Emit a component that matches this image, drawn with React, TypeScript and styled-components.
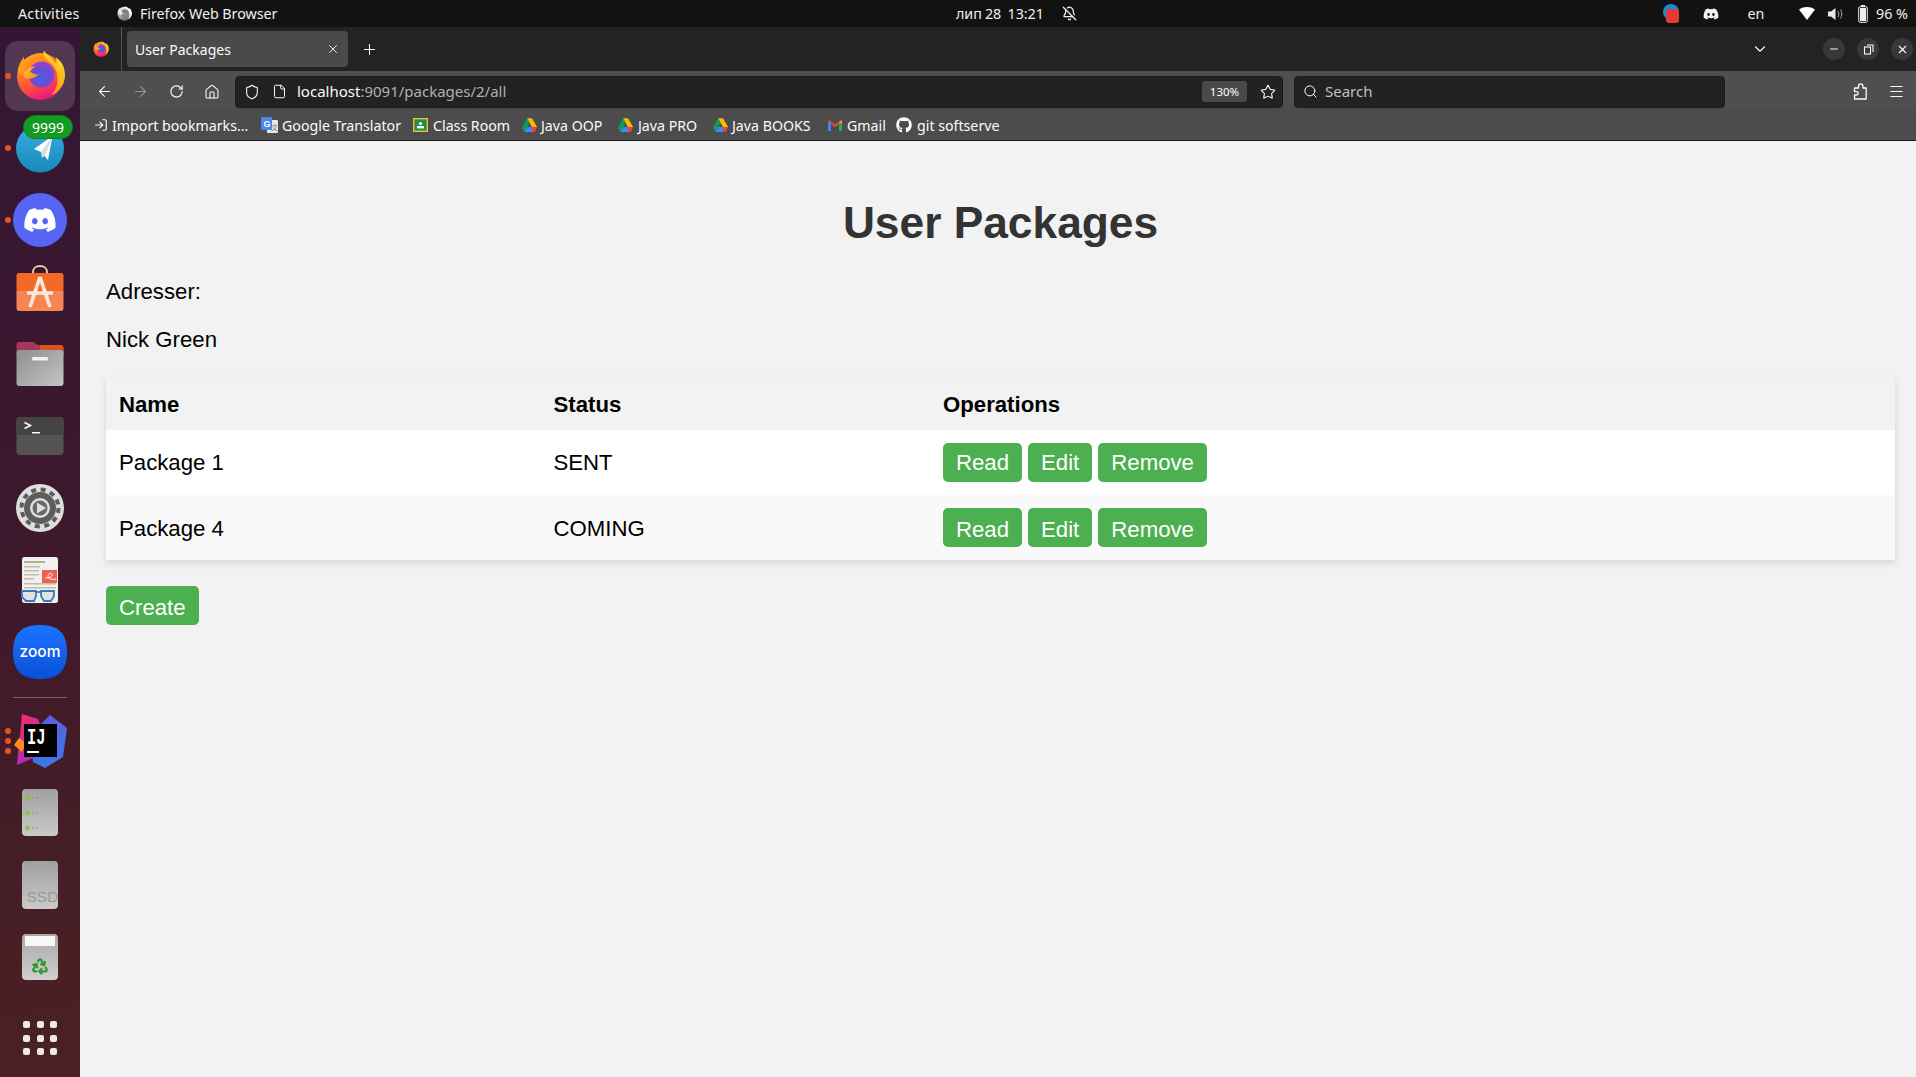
import React from 'react';
import styled, { createGlobalStyle } from 'styled-components';
import {
  ArrowLeft, ArrowRight, RotateCw, Home, Shield, File, Star, Search, Menu, X, Plus,
  ChevronDown, Minus, BellOff, Recycle, LogIn,
} from 'lucide-react';
import { FaDiscord, FaGithub } from 'react-icons/fa';

const Global = createGlobalStyle`
  html, body { margin: 0; padding: 0; height: 100%; overflow: hidden; background: #f2f2f2; }
  #root { height: 100%; }
`;

const UI = `"Noto Sans", "Open Sans", sans-serif`;
const WEB = `"Liberation Sans", Arial, sans-serif`;

const Screen = styled.div`
  width: 1916px; height: 1077px; display: flex; flex-direction: column; overflow: hidden;
  font-family: ${UI};
`;
const TopBar = styled.header`
  height: 27px; flex: none; display: flex; align-items: center; background: #121212; color: #f0f0f0;
  font-size: 14.3px; letter-spacing: -0.05px;
`;
const Activities = styled.span` margin-left: 18px; width: 62px; white-space: nowrap; letter-spacing: 0.2px; `;
const AppName = styled.span` margin-left: 37px; display: flex; align-items: center; gap: 8px; width: 160px; white-space: nowrap; `;
const GreyIcon = styled.span` display: flex; filter: grayscale(1) brightness(1.4); `;
const Clock = styled.span` margin-left: 679px; width: 88px; white-space: nowrap; word-spacing: -0.5px; `;
const Bell = styled.span` margin-left: 18px; display: flex; `;
const Tray = styled.div` margin-left: auto; display: flex; align-items: center; padding-right: 6px; `;
const TrayCell = styled.span<{ $w?: number; $ml?: number }>`
  width: ${p => p.$w ?? 20}px; margin-left: ${p => p.$ml ?? 0}px; display: flex; justify-content: center; align-items: center; white-space: nowrap;
`;
const Body = styled.div` flex: 1; display: flex; min-height: 0; `;

const Dock = styled.nav`
  width: 80px; flex: none; padding-top: 14px; box-sizing: border-box; position: relative;
  display: flex; flex-direction: column;
  background: linear-gradient(168deg, #331534 0%, #3d182d 45%, #4a2122 100%);
`;
const DockSlot = styled.div` height: 72px; flex: none; svg { display: block; overflow: visible; } `;
const DockRule = styled.div`
  height: 16px; flex: none; display: flex; align-items: center; justify-content: center;
  &::before { content: ''; width: 54px; height: 1px; background: rgba(255,255,255,.3); }
`;
const Badge = styled.span`
  position: absolute; left: 23px; top: 88px; width: 50px; height: 24px; border-radius: 12px;
  background: #149c20; border: 1px solid #0f7f1a; box-sizing: border-box; color: #fff; font-size: 14px;
  display: flex; align-items: center; justify-content: center;
`;
const AppGrid = styled.div`
  margin-top: 9px; height: 72px; flex: none; box-sizing: border-box; display: grid;
  grid-template-columns: repeat(3, 7px); grid-auto-rows: 7px; gap: 6.5px; justify-content: center; align-content: center;
`;
const AppDot = styled.i` background: #eee8e6; border-radius: 2px; `;

const Browser = styled.main` flex: 1; min-width: 0; display: flex; flex-direction: column; `;
const TabStrip = styled.div` height: 44px; flex: none; display: flex; align-items: center; background: #232323; color: #fbfbfb; `;
const TabLogo = styled.div`
  width: 42px; height: 44px; box-sizing: border-box; border-right: 1px solid #555; display: flex; align-items: center; justify-content: center;
`;
const Tab = styled.div`
  margin-left: 5px; width: 221px; height: 36px; box-sizing: border-box; padding: 0 8px;
  background: #4a4a4a; border-radius: 4px; display: flex; align-items: center; justify-content: space-between; font-size: 14px;
`;
const NewTab = styled.div` width: 42px; display: flex; justify-content: center; `;
const TabList = styled.div` margin-left: auto; margin-right: 53px; width: 20px; display: flex; justify-content: center; `;
const WindowBtns = styled.div` display: flex; gap: 12px; padding-right: 3px; `;
const WindowBtn = styled.span`
  width: 22px; height: 22px; border-radius: 50%; background: #383838; display: flex; align-items: center; justify-content: center;
`;

const NavBar = styled.div`
  height: 37px; flex: none; box-sizing: border-box; padding: 4px 2px 0 6px; display: flex; align-items: center;
  background: #4f4f4f; color: #fbfbfb;
`;
const NavBtn = styled.span<{ $off?: boolean }>`
  width: 36px; height: 32px; flex: none; display: flex; align-items: center; justify-content: center;
  opacity: ${p => (p.$off ? 0.4 : 1)};
`;
const UrlBar = styled.div`
  margin-left: 5px; width: 1048px; height: 32px; flex: none; box-sizing: border-box; padding-left: 8px;
  background: #222; border: 1px solid #1b1b1b; border-radius: 4px; display: flex; align-items: center; font-size: 15px;
`;
const UrlIcon = styled.span<{ $ml: number }>` margin-left: ${p => p.$ml}px; display: flex; `;
const Url = styled.span` margin: -2px 0 0 10px; color: #fbfbfb; white-space: nowrap; `;
const UrlRest = styled.span` color: #b0b0b0; `;
const Zoomed = styled.span`
  margin-left: auto; width: 45px; height: 21px; background: #4a4a4a; border-radius: 3px; font-size: 11.5px;
  display: flex; align-items: center; justify-content: center;
`;
const StarCell = styled.span` width: 35px; padding-left: 7px; box-sizing: border-box; display: flex; justify-content: center; `;
const SearchBar = styled(UrlBar)` margin-left: 11px; width: 431px; `;
const SearchHint = styled.span` margin: -2px 0 0 7px; color: #c0c0c0; `;
const Right = styled.div` margin-left: auto; display: flex; `;

const BookmarkBar = styled.div`
  height: 33px; flex: none; box-sizing: border-box; padding: 2px 0 0 14px; display: flex; align-items: center;
  background: #4c4c4c; border-bottom: 1px solid #1c1c1c; color: #fbfbfb; font-size: 14.2px;
`;
const Bookmark = styled.span<{ $w: number; $gap?: number }>`
  width: ${p => p.$w}px; flex: none; display: flex; align-items: center; gap: ${p => p.$gap ?? 5}px; white-space: nowrap;
`;

const Page = styled.section`
  flex: 1; min-height: 0; box-sizing: border-box; padding: 0 21px 0 26px; background: #f2f2f2;
  font-family: ${WEB}; font-size: 22.2px; color: #000;
`;
const Title = styled.h1`
  margin: 58px 0 0; font-size: 44.3px; line-height: 48px; font-weight: 700; color: #333; text-align: center;
`;
const Line = styled.p` margin: 0; line-height: 24px; `;
const LabelLine = styled(Line)` margin-top: 33px; `;
const NameLine = styled(Line)` margin-top: 24px; `;
const Table = styled.table`
  margin-top: 25px; width: 100%; border-collapse: collapse; table-layout: fixed; box-shadow: 0 3px 7px rgba(0,0,0,.12);
`;
const Th = styled.th<{ $w?: number }>`
  ${p => (p.$w ? `width: ${p.$w}px;` : '')} height: 53px; box-sizing: border-box; padding: 2px 13px 0; text-align: left; font-weight: 700; background: #f2f2f2;
`;
const Td = styled.td` padding: 0 13px; `;
const Ops = styled.div` display: flex; gap: 6px; `;
const Btn = styled.button`
  height: 39px; box-sizing: border-box; padding: 0 13px; border: 0; border-radius: 5px; background: #4caf50; color: #fff;
  font: inherit; line-height: 39px;
`;
const Row = styled.tr`
  height: 65px; background: #fff;
  &:nth-child(even) { background: #f9f9f9; }
  &:nth-child(even) td:not(:last-child) { padding-top: 2px; }
  &:nth-child(even) ${Btn} { padding-top: 2px; }
`;
const CreateBtn = styled(Btn)` margin-top: 26px; padding-top: 2px; display: block; `;

const FirefoxGlyph = ({ size, id, x, y }: { size: number; id: string; x?: number; y?: number }) => (
  <svg x={x} y={y} width={size} height={size} viewBox="0 0 48 48">
    <defs>
      <linearGradient id={`${id}a`} x1="0.8" y1="0" x2="0.5" y2="1">
        <stop offset="0" stopColor="#ffe52e" /><stop offset="1" stopColor="#ff9416" />
      </linearGradient>
      <linearGradient id={`${id}b`} x1="0.2" y1="0.1" x2="0.55" y2="1">
        <stop offset="0" stopColor="#ffa01f" /><stop offset="0.62" stopColor="#ff4f3a" /><stop offset="1" stopColor="#ee1285" />
      </linearGradient>
      <radialGradient id={`${id}c`} cx="0.5" cy="0.62" r="0.62">
        <stop offset="0" stopColor="#4f5fe8" /><stop offset="0.55" stopColor="#6a4bd6" /><stop offset="1" stopColor="#a23fc6" />
      </radialGradient>
      <linearGradient id={`${id}d`} x1="0" y1="0" x2="1" y2="1">
        <stop offset="0" stopColor="#ffc52e" /><stop offset="1" stopColor="#ff8a18" />
      </linearGradient>
    </defs>
    <circle cx="24" cy="25" r="22.5" fill={`url(#${id}b)`} />
    <path d="M27 0C26 6 30 9 34 12c5 4 7 11 6 20-1 5-3 8-6 11 8-3 13-10 13.500-18C48 15 43 9 38.500 6.500c1 2.500 1 5 .5 6.500C36 8 31 5 27 0Z" fill={`url(#${id}a)`} />
    <path d="M2 20C3 14 5 10 8 6c0 3 1 6 3 8L6 24Z" fill="#ff9a1f" />
    <path d="M10 15c1-4 4-6 7-7-1 3 0 5 2 7Z" fill="#ff8d1f" />
    <circle cx="25" cy="23" r="12.500" fill={`url(#${id}c)`} />
    <path d="M7 23c3-5 7-8 12-8-2 1.500-4.500 3.500-5 5.500 2 1.500 5 2.500 8 2.500-3 3.500-9 5-13 3.500Z" fill={`url(#${id}d)`} />
  </svg>
);

const DriveIcon = () => (
  <svg width="15" height="14" viewBox="0 0 24 22">
    <polygon points="8,0 16,0 24,14 16,14" fill="#fbbc04" />
    <polygon points="8,0 0,15 4,22 12,7" fill="#0f9d58" />
    <polygon points="4,22 20,22 24,14 8,14" fill="#4285f4" />
    <polygon points="16,14 24,14 20,22 16,22" fill="#ea4335" />
  </svg>
);
const TranslateIcon = () => (
  <svg width="17" height="16" viewBox="0 0 17 16">
    <rect x="6" y="3" width="11" height="13" rx="1" fill="#e8e8e8" />
    <text x="10" y="13" fontSize="7" fill="#777" fontFamily={`"Noto Sans CJK SC", sans-serif`}>文</text>
    <rect x="0" y="0" width="11" height="13" rx="1" fill="#4a86ed" />
    <text x="2.5" y="10" fontSize="9" fontWeight="700" fill="#fff" fontFamily={WEB}>G</text>
  </svg>
);
const ClassroomIcon = () => (
  <svg width="15" height="14" viewBox="0 0 15 14">
    <rect x="0.7" y="0.7" width="13.6" height="12.6" fill="#1e8e4e" stroke="#f6bf26" strokeWidth="1.4" />
    <circle cx="7.5" cy="5.5" r="1.6" fill="#fff" />
    <rect x="4" y="8" width="7" height="2.4" fill="#fff" />
  </svg>
);
const GmailIcon = () => (
  <svg width="14" height="11" viewBox="0 0 14 11">
    <rect x="0" y="1" width="3" height="10" fill="#4285f4" />
    <rect x="11" y="1" width="3" height="10" fill="#34a853" />
    <polygon points="0,1 1.5,0 7,4.5 7,7.5" fill="#ea4335" />
    <polygon points="14,1 12.5,0 7,4.5 7,7.5" fill="#ea4335" />
    <polygon points="11,2.8 14,0.6 14,3" fill="#fbbc04" />
  </svg>
);
const PuzzleIcon = () => (
  <svg width="14" height="17" viewBox="0 0 14 17" fill="none" stroke="#fbfbfb" strokeWidth="1.3" strokeLinejoin="round">
    <path d="M5.500 5V3a2.200 2.200 0 0 1 4.400 0v2h3.300v11H1.500v-4h2a1.700 1.700 0 0 0 0-3.400h-2V5Z" />
  </svg>
);
const RestoreIcon = () => (
  <svg width="11" height="11" viewBox="0 0 11 11" fill="none" stroke="#fbfbfb" strokeWidth="1.1">
    <rect x="1.5" y="3" width="6" height="7" />
    <path d="M4 1h6v7" />
  </svg>
);

const Slot = ({ children }: { children: React.ReactNode }) => (
  <DockSlot><svg width="80" height="72" viewBox="0 0 80 72">{children}</svg></DockSlot>
);
const RunDot = ({ y }: { y: number }) => <circle cx="8" cy={y} r="3" fill="#e95420" />;

const Apps = () => (
  <>
    <Slot>
      <rect x="5" y="0" width="70" height="70" rx="13" fill="#fff" fillOpacity=".15" />
      <RunDot y={35} />
      <FirefoxGlyph x={15.5} y={9.5} size={50} id="dk" />
    </Slot>
    <Slot>
      <defs><linearGradient id="tg" x1="0" y1="0" x2="0" y2="1"><stop offset="0" stopColor="#37aee2" /><stop offset="1" stopColor="#1a88bb" /></linearGradient></defs>
      <RunDot y={35} />
      <circle cx="40" cy="35.5" r="24" fill="url(#tg)" />
      <polygon points="52.5,23 34,36 41,39 48,47" fill="#fff" />
      <polygon points="52.5,23 41,39 42,45 45.5,42" fill="#d5dde4" />
    </Slot>
    <Slot>
      <RunDot y={35} />
      <circle cx="40" cy="35" r="27" fill="#5865f2" />
      <FaDiscord x="23" y="18" size={34} color="#fff" />
    </Slot>
    <Slot>
      <path d="M33 17v-2c0-8 14-8 14 0v2" fill="none" stroke="#eecfa0" strokeWidth="2" />
      <path d="M19 16h42a2.5 2.5 0 0 1 2.5 2.5V34h-47V18.500A2.500 2.500 0 0 1 19 16Z" fill="#f26a2a" />
      <path d="M16.500 34h47v17a3 3 0 0 1-3 3h-41a3 3 0 0 1-3-3Z" fill="#f58654" />
      <path d="M40 20 30 50M40 20l10 30M27 36h26" stroke="#fde7dc" strokeWidth="3.600" fill="none" />
    </Slot>
    <Slot>
      <path d="M16.500 16a3 3 0 0 1 3-3h14l4 3h23a3 3 0 0 1 3 3v8h-47Z" fill="#a5375a" />
      <path d="M40 16h20a3 3 0 0 1 3.500 3v6H40Z" fill="#d9541f" />
      <defs><linearGradient id="fl" x1="0" y1="0" x2="1" y2="1"><stop offset="0" stopColor="#8f8f8f" /><stop offset="1" stopColor="#c4c4c4" /></linearGradient></defs>
      <rect x="16.500" y="21" width="47" height="36" rx="3" fill="url(#fl)" />
      <rect x="32" y="28" width="16" height="3.500" rx="1.500" fill="#f2f2f2" />
    </Slot>
    <Slot>
      <rect x="16.500" y="16" width="47" height="38" rx="3.500" fill="#545454" />
      <path d="M16.500 34V19.500a3.500 3.500 0 0 1 3.500-3.500h40a3.500 3.500 0 0 1 3.500 3.500V34Z" fill="#444" />
      <path d="M24.500 21.500l6 3-6 3" fill="none" stroke="#fff" strokeWidth="1.500" />
      <rect x="32" y="31" width="8" height="1.500" fill="#fff" />
    </Slot>
    <Slot>
      <circle cx="40" cy="35" r="24" fill="#dedede" />
      <circle cx="40" cy="35" r="16" fill="#5d5d5d" />
      <circle cx="40" cy="35" r="18.500" fill="none" stroke="#5d5d5d" strokeWidth="4" strokeDasharray="5 4.700" />
      <circle cx="40" cy="35" r="10" fill="#dedede" />
      <circle cx="40" cy="35" r="7.500" fill="#6a6a6a" />
      <polygon points="37,29.500 46,35 37,40.500" fill="#dedede" />
    </Slot>
    <Slot>
      <rect x="22" y="12" width="36" height="46" rx="2.500" fill="#f2f0ec" />
      <rect x="24" y="16" width="21" height="2" fill="#b5ae9d" />
      <rect x="24" y="21" width="16" height="1.500" fill="#c0bcae" />
      <rect x="24" y="25" width="15" height="1.500" fill="#c0bcae" />
      <rect x="24" y="29" width="15" height="1.500" fill="#c0bcae" />
      <rect x="24" y="33" width="10" height="1.500" fill="#c0bcae" />
      <rect x="24" y="38" width="32" height="1.500" fill="#c0bcae" />
      <rect x="24" y="42" width="32" height="1.500" fill="#c0bcae" />
      <rect x="42" y="25" width="15" height="13" fill="#f0604e" />
      <path d="M45 33c5 0 8-2 7-4-1-1.500-4-.5-4 2s3 4 8 3" stroke="#fff" strokeWidth="1" fill="none" />
      <path d="M22 46h14v5l-2 5h-8l-4-4ZM41 46h13v5l-3 5h-7l-3-5Z" fill="#d6dcdf" fillOpacity=".7" stroke="#3a78b8" strokeWidth="1.800" />
      <path d="M36 47h5" stroke="#3a78b8" strokeWidth="1.800" />
    </Slot>
    <Slot>
      <defs><linearGradient id="zm" x1="0" y1="0" x2="0" y2="1"><stop offset="0" stopColor="#1c74ff" /><stop offset="1" stopColor="#0a50d8" /></linearGradient></defs>
      <path d="M40 8c18 0 27 8 27 27s-9 27-27 27-27-8-27-27S22 8 40 8Z" fill="url(#zm)" />
      <text x="40" y="39.500" textAnchor="middle" fontFamily="Inter, sans-serif" fontSize="15.500" fontWeight="500" fill="#fff">zoom</text>
    </Slot>
    <DockRule />
    <Slot>
      <defs>
        <linearGradient id="ijp" x1="0" y1="0" x2="0.6" y2="1"><stop offset="0" stopColor="#ff2b62" /><stop offset="1" stopColor="#a32ad0" /></linearGradient>
        <linearGradient id="ijb" x1="0" y1="0" x2="0" y2="1"><stop offset="0" stopColor="#5b5fe0" /><stop offset="1" stopColor="#3b78e8" /></linearGradient>
      </defs>
      <circle cx="8" cy="26" r="3" fill="#e95420" />
      <circle cx="8" cy="36" r="3" fill="#e95420" />
      <circle cx="8" cy="46" r="3" fill="#e95420" />
      <polygon points="50,10 67,23 63,52 45,63 33,57 30,30" fill="url(#ijb)" />
      <polygon points="22,9 38,14 44,30 36,52 17,60 20,30" fill="url(#ijp)" />
      <polygon points="19,33 14,40 22,47 26,38" fill="#ff8c1a" />
      <rect x="24" y="19" width="33" height="33" fill="#000" />
      <text x="27" y="38.500" fontFamily={`"Liberation Mono", monospace`} fontSize="22" fontWeight="700" textLength="18.500" lengthAdjust="spacingAndGlyphs" fill="#fff">IJ</text>
      <rect x="27" y="46" width="12" height="2" fill="#fff" />
    </Slot>
    <Slot>
      <defs><linearGradient id="dr" x1="0" y1="0" x2="0" y2="1"><stop offset="0" stopColor="#a0a0a0" /><stop offset="1" stopColor="#c9c9c9" /></linearGradient></defs>
      <rect x="22" y="12" width="36" height="47" rx="4" fill="url(#dr)" />
      {[21, 36, 51].map(y => (
        <g key={y}>
          <circle cx="27.500" cy={y} r="2.500" fill="#8bc34a" />
          <circle cx="33" cy={y} r=".8" fill="#888" />
          <circle cx="37" cy={y} r=".8" fill="#888" />
        </g>
      ))}
    </Slot>
    <Slot>
      <rect x="22" y="12" width="36" height="48" rx="4" fill="url(#dr)" />
      <text x="26.500" y="53" fontFamily={`"Liberation Sans", sans-serif`} fontSize="15.500" fill="#999">SSD</text>
    </Slot>
    <Slot>
      <defs><linearGradient id="tr" x1="0" y1="0" x2="0" y2="1"><stop offset="0" stopColor="#a8a8a8" /><stop offset="1" stopColor="#d0d0d0" /></linearGradient></defs>
      <rect x="22" y="13" width="36" height="46" rx="4" fill="url(#tr)" />
      <path d="M25 15h30v10H25Z" fill="#f7f7f7" />
      <Recycle x="31" y="36" width="18" height="18" color="#2f9a2f" strokeWidth={3} />
    </Slot>
  </>
);

const rows = [
  { name: 'Package 1', status: 'SENT' },
  { name: 'Package 4', status: 'COMING' },
];

const bookmarks: { w: number; gap?: number; icon: React.ReactNode; label: string }[] = [
  { w: 167, gap: 4, icon: <LogIn size={14} />, label: 'Import bookmarks…' },
  { w: 152, gap: 4, icon: <TranslateIcon />, label: 'Google Translator' },
  { w: 109, icon: <ClassroomIcon />, label: 'Class Room' },
  { w: 96, gap: 4, icon: <DriveIcon />, label: 'Java OOP' },
  { w: 95, gap: 5, icon: <DriveIcon />, label: 'Java PRO' },
  { w: 115, gap: 4, icon: <DriveIcon />, label: 'Java BOOKS' },
  { w: 68, gap: 5, icon: <GmailIcon />, label: 'Gmail' },
  { w: 110, gap: 5, icon: <FaGithub size={16} />, label: 'git softserve' },
];

export default function App() {
  return (
    <Screen>
      <Global />
      <TopBar>
        <Activities>Activities</Activities>
        <AppName><GreyIcon><FirefoxGlyph size={15} id="tb" /></GreyIcon>Firefox Web Browser</AppName>
        <Clock>лип 28{'\u00a0 '}13:21</Clock>
        <Bell><BellOff size={15} /></Bell>
        <Tray>
          <TrayCell>
            <svg width="16" height="19" viewBox="0 0 16 19"><circle cx="8" cy="8" r="8" fill="#1e88d8" /><rect x="3" y="5" width="13" height="14" rx="3" fill="#e53935" /></svg>
          </TrayCell>
          <TrayCell $ml={20}><FaDiscord size={16} /></TrayCell>
          <TrayCell $ml={25}>en</TrayCell>
          <TrayCell $ml={31}>
            <svg width="16" height="13" viewBox="0 0 16 13"><path d="M0 2.500C4.500-.8 11.500-.8 16 2.500L8 13Z" fill="#fff" /></svg>
          </TrayCell>
          <TrayCell $ml={8}>
            <svg width="15" height="14" viewBox="0 0 15 14"><path d="M0 4.500h3L7.500 1v12L3 9.500H0Z" fill="#e8e8e8" /><path d="M10 4c1 1.800 1 4.200 0 6M12.500 2.500c1.800 2.800 1.800 6.200 0 9" fill="none" stroke="#aaa" /></svg>
          </TrayCell>
          <TrayCell $ml={8}>
            <svg width="10" height="18" viewBox="0 0 10 18"><rect x="3" y="0" width="4" height="2" fill="#eee" /><rect x=".7" y="1.700" width="8.600" height="15.600" rx="1.500" fill="none" stroke="#eee" /><rect x="2" y="3" width="6" height="13" fill="#eee" /></svg>
          </TrayCell>
          <TrayCell $w={36} $ml={1}>96 %</TrayCell>
        </Tray>
      </TopBar>
      <Body>
        <Dock>
          <Apps />
          <Badge>9999</Badge>
          <AppGrid>{Array.from({ length: 9 }, (_, i) => <AppDot key={i} />)}</AppGrid>
        </Dock>
        <Browser>
          <TabStrip>
            <TabLogo><FirefoxGlyph size={16} id="tl" /></TabLogo>
            <Tab>User Packages<X size={14} strokeWidth={1.5} /></Tab>
            <NewTab><Plus size={17} strokeWidth={1.5} /></NewTab>
            <TabList><ChevronDown size={18} strokeWidth={1.5} /></TabList>
            <WindowBtns>
              <WindowBtn><Minus size={12} /></WindowBtn>
              <WindowBtn><RestoreIcon /></WindowBtn>
              <WindowBtn><X size={13} /></WindowBtn>
            </WindowBtns>
          </TabStrip>
          <NavBar>
            <NavBtn><ArrowLeft size={17} strokeWidth={1.6} /></NavBtn>
            <NavBtn $off><ArrowRight size={17} strokeWidth={1.6} /></NavBtn>
            <NavBtn><RotateCw size={15} strokeWidth={1.8} /></NavBtn>
            <NavBtn><Home size={16} strokeWidth={1.6} /></NavBtn>
            <UrlBar>
              <UrlIcon $ml={0}><Shield size={16} strokeWidth={1.6} /></UrlIcon>
              <UrlIcon $ml={12}><File size={15} strokeWidth={1.6} /></UrlIcon>
              <Url>localhost<UrlRest>:9091/packages/2/all</UrlRest></Url>
              <Zoomed>130%</Zoomed>
              <StarCell><Star size={16} strokeWidth={1.6} /></StarCell>
            </UrlBar>
            <SearchBar>
              <UrlIcon $ml={0}><Search size={15} strokeWidth={1.6} /></UrlIcon>
              <SearchHint>Search</SearchHint>
            </SearchBar>
            <Right>
              <NavBtn><PuzzleIcon /></NavBtn>
              <NavBtn><Menu size={17} strokeWidth={1.6} /></NavBtn>
            </Right>
          </NavBar>
          <BookmarkBar>
            {bookmarks.map(b => (
              <Bookmark key={b.label} $w={b.w} $gap={b.gap}>{b.icon}{b.label}</Bookmark>
            ))}
          </BookmarkBar>
          <Page>
            <Title>User Packages</Title>
            <LabelLine>Adresser:</LabelLine>
            <NameLine>Nick Green</NameLine>
            <Table>
              <thead>
                <tr><Th $w={434.5}>Name</Th><Th $w={389.5}>Status</Th><Th>Operations</Th></tr>
              </thead>
              <tbody>
                {rows.map(r => (
                  <Row key={r.name}>
                    <Td>{r.name}</Td>
                    <Td>{r.status}</Td>
                    <Td><Ops><Btn>Read</Btn><Btn>Edit</Btn><Btn>Remove</Btn></Ops></Td>
                  </Row>
                ))}
              </tbody>
            </Table>
            <CreateBtn>Create</CreateBtn>
          </Page>
        </Browser>
      </Body>
    </Screen>
  );
}
